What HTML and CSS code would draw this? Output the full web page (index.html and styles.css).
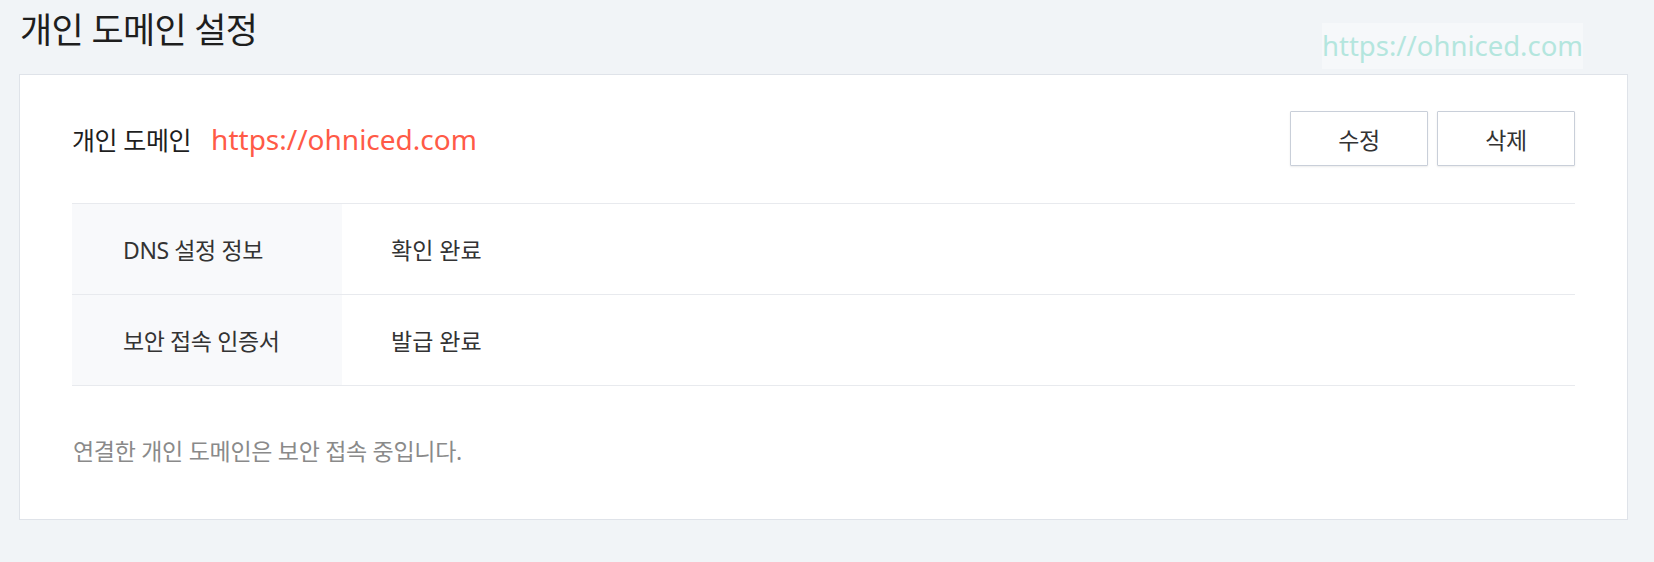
FILE: index.html
```html
<!DOCTYPE html>
<html lang="ko">
<head>
<meta charset="utf-8">
<title>개인 도메인 설정</title>
<link rel="stylesheet" href="styles.css">
</head>
<body>
<div class="page">
  <h1 class="title">개인 도메인 설정</h1>
  <div class="watermark">https://ohniced.com</div>
  <section class="card">
    <div class="head">
      <div class="domain">
        <span class="domain-label">개인 도메인</span>
        <span class="domain-url">https://ohniced.com</span>
      </div>
      <div class="actions">
        <button class="btn">수정</button>
        <button class="btn">삭제</button>
      </div>
    </div>
    <div class="table">
      <div class="row">
        <div class="cell-label">DNS 설정 정보</div>
        <div class="cell-value">확인 완료</div>
      </div>
      <div class="row">
        <div class="cell-label">보안 접속 인증서</div>
        <div class="cell-value">발급 완료</div>
      </div>
    </div>
    <p class="note">연결한 개인 도메인은 보안 접속 중입니다.</p>
  </section>
</div>
</body>
</html>
```

FILE: styles.css
```css
html, body {
  margin: 0;
  padding: 0;
  background: #f1f4f7;
}
body {
  font-family: "Noto Sans", "Noto Sans CJK KR", sans-serif;
  color: #222;
}
.page {
  position: relative;
  padding: 0 26px 0 19px;
}
.title {
  margin: 0;
  padding: 7px 0 0 1px;
  height: 74px;
  box-sizing: border-box;
  font-size: 35px;
  line-height: 46px;
  font-weight: 400;
  letter-spacing: -0.7px;
  color: #1e1e1e;
}
.watermark {
  position: absolute;
  left: 1322px;
  top: 23px;
  width: 261px;
  height: 46px;
  background: #f6f8fa;
  color: #b4e6de;
  font-size: 27.5px;
  line-height: 46px;
  text-align: center;
  white-space: nowrap;
}
.card {
  background: #fff;
  border: 1px solid #dfe3e9;
  padding: 36px 52px 53px;
}
.head {
  display: flex;
  justify-content: space-between;
  align-items: center;
}
.domain {
  display: flex;
  align-items: center;
  gap: 20px;
}
.domain-label {
  font-size: 25px;
  letter-spacing: -0.4px;
  color: #1e1e1e;
}
.domain-url {
  font-size: 28px;
  color: #ff5a47;
}
.actions {
  display: flex;
  gap: 9px;
}
.btn {
  width: 138px;
  height: 55px;
  background: #fff;
  border: 1px solid #c9cfd9;
  border-radius: 1px;
  box-shadow: 0 1px 2px rgba(0, 0, 0, 0.08);
  font-family: inherit;
  font-size: 23px;
  letter-spacing: -0.3px;
  color: #333;
  padding: 0;
}
.table {
  margin-top: 37px;
  border-top: 1px solid #e8eaee;
}
.row {
  display: flex;
  height: 90px;
  border-bottom: 1px solid #e8eaee;
}
.cell-label {
  width: 270px;
  background: #f8f9fb;
  padding-left: 51px;
  box-sizing: border-box;
  display: flex;
  align-items: center;
  font-size: 23px;
  letter-spacing: -0.4px;
  color: #333;
}
.cell-value {
  padding-left: 49px;
  display: flex;
  align-items: center;
  font-size: 23px;
  letter-spacing: 0px;
  color: #333;
}
.note {
  margin: 50px 0 0 1px;
  font-size: 23px;
  line-height: 30px;
  letter-spacing: -0.3px;
  color: #8a8a8a;
}
```
